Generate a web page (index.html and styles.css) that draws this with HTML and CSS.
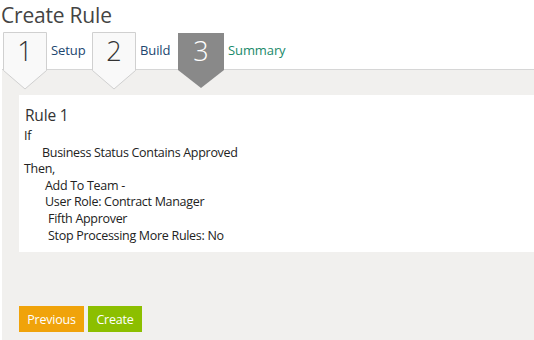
FILE: index.html
```html
<!DOCTYPE html>
<html>
<head>
<meta charset="utf-8">
<link rel="stylesheet" href="styles.css">
</head>
<body>
<h1 class="title">Create Rule</h1>
<div class="steps">
  <div class="step">
    <svg class="step-shape" width="45" height="58" viewBox="0 0 45 58"><path d="M0.5 0.5 H43.5 V38.5 L22 57 L0.5 38.5 Z" fill="#f9f9f9" stroke="#d0d0d0"/></svg>
    <span class="step-num">1</span>
  </div>
  <span class="step-label done w1">Setup</span>
  <div class="step">
    <svg class="step-shape" width="45" height="58" viewBox="0 0 45 58"><path d="M0.5 0.5 H43.5 V38.5 L22 57 L0.5 38.5 Z" fill="#f9f9f9" stroke="#d0d0d0"/></svg>
    <span class="step-num">2</span>
  </div>
  <span class="step-label done w2">Build</span>
  <div class="step active">
    <svg class="step-shape" width="46" height="58" viewBox="0 0 46 58"><path d="M0 0 H46 V37 L23 55 L0 37 Z" fill="#898989"/></svg>
    <span class="step-num">3</span>
  </div>
  <span class="step-label current">Summary</span>
</div>
<div class="panel">
  <div class="card">
    <div class="rule-name">Rule 1</div>
    <div class="line">If</div>
    <div class="line ind1">Business Status Contains Approved</div>
    <div class="line">Then,</div>
    <div class="line ind2">Add To Team -</div>
    <div class="line ind2">User Role: Contract Manager</div>
    <div class="line ind3">Fifth Approver</div>
    <div class="line ind3">Stop Processing More Rules: No</div>
  </div>
  <div class="actions">
    <button class="btn btn-prev">Previous</button>
    <button class="btn btn-create">Create</button>
  </div>
</div>
</body>
</html>
```
FILE: styles.css
```css
html, body {
  margin: 0;
  padding: 0;
  background: #fff;
  overflow: hidden;
}
body {
  font-family: "Open Sans", "Noto Sans", sans-serif;
  color: #222;
  width: 534px;
  height: 340px;
}
.title {
  margin: 0;
  padding: 2px 0 0 1px;
  height: 30px;
  font-size: 21px;
  font-weight: 400;
  line-height: 27px;
  color: #444;
  letter-spacing: -0.2px;
}
.steps {
  display: flex;
  align-items: center;
  height: 37px;
  margin-left: 3px;
  position: relative;
  z-index: 2;
}
.step {
  position: relative;
  width: 44px;
  height: 37px;
  flex: none;
  align-self: flex-start;
}
.step.active {
  width: 46px;
  margin-top: 1px;
}
.step-shape {
  position: absolute;
  left: 0;
  top: 0;
}
.step-num {
  position: relative;
  display: block;
  text-align: center;
  font-size: 27px;
  font-weight: 300;
  line-height: 37px;
  color: #333;
}
.step.active .step-num {
  color: #fff;
  line-height: 35px;
}
.step-label {
  font-size: 13px;
  margin-top: -1px;
  padding-left: 4px;
  box-sizing: border-box;
  flex: none;
  letter-spacing: -0.1px;
}
.w1 { width: 45px; }
.w2 { width: 42px; }
.step-label.done { color: #20466f; }
.step-label.current { color: #19896a; }
.panel {
  margin-left: 2px;
  border-top: 1px solid #d6d6d6;
  background: #f1f0ee;
  height: 271px;
  padding: 25px 0 0 17px;
  box-sizing: border-box;
}
.card {
  background: #fff;
  height: 157px;
  padding: 9px 0 0 5px;
  box-sizing: border-box;
  font-size: 12.5px;
  letter-spacing: -0.3px;
  color: #222;
}
.rule-name {
  font-size: 15.5px;
  line-height: 22px;
  margin: 0 0 2px 1px;
  color: #333;
  letter-spacing: -0.2px;
}
.line {
  line-height: 16.6px;
}
.ind1 { padding-left: 18px; }
.ind2 { padding-left: 21px; }
.ind3 { padding-left: 24px; }
.actions {
  display: flex;
  gap: 4px;
  margin-top: 54px;
}
.btn {
  border: 0;
  margin: 0;
  height: 26px;
  padding: 0;
  font-family: inherit;
  font-size: 12.5px;
  color: #fff;
  letter-spacing: -0.2px;
}
.btn-prev { background: #f0a30a; width: 65px; }
.btn-create { background: #8cbf00; width: 54px; }
```
